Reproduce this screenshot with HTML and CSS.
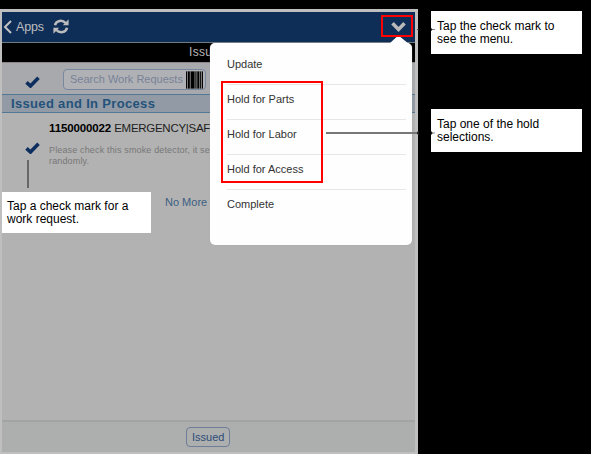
FILE: index.html
```
<!DOCTYPE html>
<html lang="en">
<head>
<meta charset="utf-8">
<title>Work Requests</title>
<link rel="stylesheet" href="styles.css">
</head>
<body>
<main class="app">
  <header class="topbar">
    <svg class="back" viewBox="0 0 9 14"><path d="M8 1 2 7l6 6"/></svg>
    <span class="apps">Apps</span>
    <svg class="refresh" viewBox="0 0 16 15"><path class="arc" d="M2 6.3C3 1.2 9.5.5 12.6 4M14 8.7C13 13.8 6.5 14.5 3.4 11"/><path class="tip" d="M15.6.3v6H9.8zM.4 14.7v-6h5.8z"/></svg>
    <svg class="chevron" viewBox="0 0 15 11"><path d="M1.5 2.3 7.5 8.4l6-6.1"/></svg>
  </header>
  <div class="titlebar"><span>Issued</span></div>
  <div class="searchbar">
    <svg class="check" viewBox="0 0 15 12"><path d="M1.5 6.4 5.5 10 13.5 1.8"/></svg>
    <div class="search"><span>Search Work Requests</span>
      <svg class="barcode" viewBox="0 0 18 18"><path d="M0 0h1v18H0zM2 0h2v18H2zM5 0h4v18H5zM10 0h1v18h-1zM12 0h2v18h-2zM15 0h1v18h-1zM17 0h1v18h-1z"/></svg>
    </div>
  </div>
  <h2 class="section"><span>Issued and In Process</span></h2>
  <div class="list">
    <div class="request">
      <svg class="check" viewBox="0 0 15 12"><path d="M1.5 6.4 5.5 10 13.5 1.8"/></svg>
      <div class="details">
        <div class="name"><b>1150000022</b> <span>EMERGENCY|SAF</span></div>
        <p>Please check this smoke detector, it se<br>randomly.</p>
      </div>
    </div>
    <div class="more">No More</div>
  </div>
  <footer class="footer"><span class="issued">Issued</span></footer>
</main>
<nav class="menu">
  <svg class="pointer" viewBox="0 0 20 8"><path d="M0 8 7 1.5Q9.5-1 12 1.5L20 8z"/></svg>
  <div>Update</div>
  <div>Hold for Parts</div>
  <div>Hold for Labor</div>
  <div>Hold for Access</div>
  <div>Complete</div>
</nav>
<div class="mark mark-top"></div>
<div class="mark mark-holds"></div>
<div class="lead lead-check"></div>
<div class="lead lead-holds"></div>
<svg class="dots" viewBox="0 0 18 110"><path d="M0 3.5 2 2v3zM14 2l2 1.5L14 5zM0 106l2-1v4l-2-1zM14 105l2 2-2 2z"/><path class="dash" d="M16 3.5h2M16 107h2"/></svg>
<aside class="note note-check">Tap a check mark for a<br>work request.</aside>
<aside class="note note-menu">Tap the check mark to<br>see the menu.</aside>
<aside class="note note-holds">Tap one of the hold<br>selections.</aside>
</body>
</html>
```
FILE: styles.css
```
* { box-sizing: border-box; }
body {
  margin: 0;
  width: 591px;
  height: 454px;
  padding-top: 9px;
  overflow: hidden;
  position: relative;
  background: #000;
  font: 11px/14px "Liberation Sans", Arial, sans-serif;
  white-space: nowrap;
}
svg { display: block; flex: none; }
.app {
  width: 418px;
  height: 445px;
  border: solid #bfbfbf;
  border-width: 3px 3px 2px 2px;
  display: flex;
  flex-direction: column;
  background: #b2b2b2;
}
.topbar {
  flex: 0 0 31px;
  display: flex;
  align-items: center;
  padding: 0 10px 1px 1px;
  background: #0e2d57;
  border-bottom: 1px solid #6f7c82;
  color: #bdbdbd;
}
.back { width: 9px; height: 14px; fill: none; stroke: #c4c4c4; stroke-width: 2; }
.apps { margin-left: 4px; width: 28px; font-size: 12.5px; letter-spacing: -.2px; }
.refresh { width: 16px; height: 15px; margin-left: 9px; }
.arc { fill: none; stroke: #bcbcbc; stroke-width: 2.5; }
.tip { fill: #bcbcbc; }
.chevron { width: 15px; height: 11px; margin-left: auto; margin-right: -1px; fill: none; stroke: #b9b9b9; stroke-width: 3.6; }
.titlebar {
  flex: 0 0 19px;
  padding: 2px 0 0 187px;
  background: #000;
  color: #b9b9b9;
  font-size: 12px;
  letter-spacing: .3px;
}
.searchbar {
  flex: 0 0 32px;
  display: flex;
  align-items: flex-start;
  padding-left: 23px;
  background: #a8a9ac;
  border-top: 1px solid #8d8587;
}
.check { width: 15px; height: 12px; fill: none; stroke: #0d2f60; stroke-width: 3.6; }
.searchbar .check { margin-top: 13px; }
.search {
  width: 143px;
  height: 21px;
  margin: 6px 0 0 23px;
  border: 1px solid #7787a0;
  border-radius: 4px;
  background: #b0b1b4;
  display: flex;
  align-items: center;
  padding-left: 6px;
  color: #788298;
  letter-spacing: 0;
}
.search span { padding-bottom: 1px; }
.barcode { width: 17px; height: 18px; margin-left: auto; margin-right: 2px; background: #888; }
.section {
  flex: 0 0 18px;
  margin: 0;
  padding-left: 9px;
  border: solid #527895;
  border-width: 1px 0;
  background: #929aa6;
  color: #24537a;
  font-size: 13px;
  letter-spacing: .33px;
  line-height: 17px;
}
.list { flex: 1; }
.request { display: flex; padding: 8px 0 0 23px; height: 82px; }
.request .check { margin-top: 21px; }
.details { margin-left: 9px; }
.name { color: #202020; font-size: 11.5px; line-height: 14px; letter-spacing: -.12px; }
.name span { letter-spacing: -.28px; }
.name b { color: #000; }
.details p { margin: 10px 0 0; font-size: 9px; line-height: 11px; color: #777; letter-spacing: .15px; }
.more { padding-left: 163px; color: #3c5f82; }
.footer {
  flex: 0 0 32px;
  border-top: 2px solid #a2a4a3;
  background: #acafae;
  display: flex;
  padding: 5px 0 0 184px;
}
.issued {
  width: 44px;
  height: 20px;
  border: 1px solid #707d98;
  border-radius: 4px;
  padding: 2px 0 0 5px;
  color: #2e4b78;
}
.menu {
  position: absolute;
  left: 210px;
  top: 43px;
  width: 202px;
  height: 202px;
  padding: 7px 6px 0 17px;
  border-radius: 5px;
  background: #fefefe;
  box-shadow: 0 0 1px #999;
  color: #333;
}
.pointer { position: absolute; left: 179px; top: -7px; width: 20px; height: 8px; fill: #fefefe; }
.menu div { height: 35px; padding-top: 7px; border-bottom: 1px solid #e7e7e7; }
.menu div:last-child { border: 0; }
.mark { position: absolute; border: 2px solid #f00; }
.mark-top { left: 381px; top: 15px; width: 32px; height: 22px; }
.mark-holds { left: 221px; top: 81px; width: 102px; height: 102px; }
.lead { position: absolute; background: #777; }
.lead-check { left: 27px; top: 160px; width: 2px; height: 28px; background: #666; }
.lead-holds { left: 326px; top: 132px; width: 92px; height: 2px; }
.note {
  position: absolute;
  background: #fff;
  color: #000;
  font: 12px/13px "Liberation Sans", Arial, sans-serif;
}
.note-check { left: 2px; top: 192px; width: 149px; height: 41px; padding: 8px 0 0 5px; }
.note-menu { left: 431px; top: 11px; width: 151px; height: 43px; padding: 9px 0 0 6px; }
.note-holds { left: 431px; top: 109px; width: 151px; height: 43px; padding: 9px 0 0 6px; }
.dots { position: absolute; left: 417px; top: 26px; width: 18px; height: 110px; z-index: 2; fill: #222; }
.dash { stroke: #888; }
```
